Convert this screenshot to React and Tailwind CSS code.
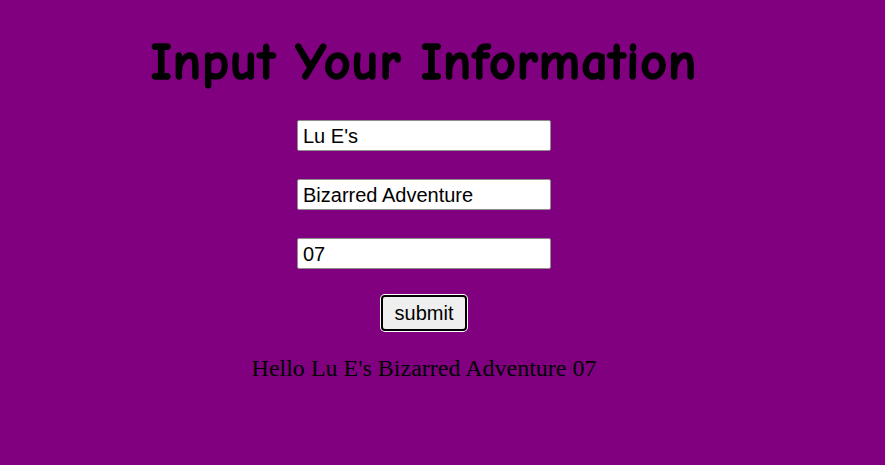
import React, { useState } from "react";

export default function App() {
  const [first, setFirst] = useState("Lu E's");
  const [last, setLast] = useState("Bizarred Adventure");
  const [num, setNum] = useState("07");

  const inputClass =
    "block w-[254px] h-[31px] bg-white border border-[#8f8f8f] rounded-[2px] px-[5px] pt-[1px] text-[20px] text-black outline-none";

  return (
    <div className="min-h-screen bg-[#800080]" style={{ fontFamily: '"Liberation Sans", Arial, sans-serif' }}>
      <div className="w-[848px] flex flex-col items-center">
        <h1
          className="mt-[32px] h-[60px] leading-[60px] text-[52px] tracking-[1px] font-bold text-black [-webkit-text-stroke:1.5px_black]"
          style={{ fontFamily: '"Comic Sans MS", "Comic Neue", Lato, sans-serif' }}
        >
          Input Your Information
        </h1>

        <form className="flex flex-col items-center gap-[28px] mt-[28px]" onSubmit={(e) => e.preventDefault()}>
          <input className={inputClass} value={first} onChange={(e) => setFirst(e.target.value)} />
          <input className={inputClass} value={last} onChange={(e) => setLast(e.target.value)} />
          <input className={inputClass} value={num} onChange={(e) => setNum(e.target.value)} />
          <button
            type="submit"
            className="-mt-[2px] w-[86px] h-[36px] bg-[#efefef] text-black text-[20px] border-2 border-black rounded-[4px] ring-1 ring-white"
          >
            submit
          </button>
        </form>

        <p
          className="mt-[23px] text-[24px] leading-[28px] text-black"
          style={{ fontFamily: '"Liberation Serif", "Times New Roman", serif' }}
        >
          Hello {first} {last} {num}
        </p>
      </div>
    </div>
  );
}
